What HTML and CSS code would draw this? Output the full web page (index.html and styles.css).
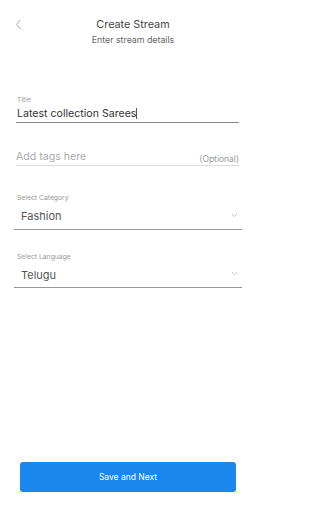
FILE: index.html
```html
<!DOCTYPE html>
<html>
<head>
<meta charset="utf-8">
<link rel="stylesheet" href="styles.css">
</head>
<body>
<div class="page">
  <header class="header">
    <span class="back">
      <svg width="8" height="12" viewBox="0 0 8 12"><path d="M5.5 1 L1.5 5.5 L5.5 10" fill="none" stroke="#aaa" stroke-width="1"/></svg>
    </span>
    <div class="titles">
      <div class="h-title">Create Stream</div>
      <div class="h-sub">Enter stream details</div>
    </div>
    <span></span>
  </header>

  <div class="form">
    <div class="field field-title">
      <div class="label">Title</div>
      <div class="value">Latest collection Sarees<span class="caret"></span></div>
    </div>

    <div class="field field-tags">
      <span class="placeholder">Add tags here</span>
      <span class="optional">(Optional)</span>
    </div>

    <div class="select select-cat">
      <div class="label">Select Category</div>
      <div class="sel-row">
        <span class="sel-value">Fashion</span>
        <svg class="down" width="7" height="5" viewBox="0 0 7 5"><path d="M0.8 1 L3.5 3.6 L6.2 1" fill="none" stroke="#bbb" stroke-width="0.9"/></svg>
      </div>
    </div>

    <div class="select select-lang">
      <div class="label">Select Language</div>
      <div class="sel-row">
        <span class="sel-value">Telugu</span>
        <svg class="down" width="7" height="5" viewBox="0 0 7 5"><path d="M0.8 1 L3.5 3.6 L6.2 1" fill="none" stroke="#bbb" stroke-width="0.9"/></svg>
      </div>
    </div>
  </div>

  <div class="footer">
    <button class="btn">Save and Next</button>
  </div>
</div>
</body>
</html>
```

FILE: styles.css
```css
* { box-sizing: border-box; }
html, body { margin: 0; padding: 0; background: #fff; }
body {
  font-family: Inter, "Open Sans", "Liberation Sans", sans-serif;
  width: 256px;
  height: 512px;
  overflow: hidden;
}
.page {
  display: flex;
  flex-direction: column;
  height: 512px;
}
.header {
  display: grid;
  grid-template-columns: 35px 1fr 25px;
  padding-top: 18px;
}
.back {
  padding-left: 15px;
  padding-top: 1px;
  display: block;
  height: 12px;
}
.back svg { display: block; }
.titles { text-align: center; }
.h-title {
  font-size: 10.8px;
  line-height: 14px;
  color: #444;
}
.h-sub {
  font-size: 8.8px;
  line-height: 11px;
  color: #666;
  margin-top: 2px;
}
.form {
  display: flex;
  flex-direction: column;
  padding: 0 17px 0 16px;
  margin-top: 49.5px;
}
.label {
  font-size: 6.8px;
  line-height: 9px;
  color: #999;
}
.field-title .label { padding-left: 1px; }
.value {
  font-size: 10.6px;
  line-height: 13px;
  color: #333;
  margin-top: 3.5px;
  padding-left: 1px;
  padding-bottom: 2px;
  border-bottom: 1px solid #888;
}
.caret {
  display: inline-block;
  width: 1px;
  height: 11px;
  background: #555;
  vertical-align: -2px;
}
.field-tags {
  display: flex;
  justify-content: space-between;
  align-items: flex-end;
  margin-top: 27px;
  padding-bottom: 2px;
  border-bottom: 1px solid #ddd;
}
.placeholder {
  font-size: 10.6px;
  line-height: 13px;
  color: #aaa;
}
.optional {
  font-size: 8.5px;
  line-height: 11px;
  color: #999;
  margin-bottom: -2px;
}
.select {
  margin-left: -2px;
  margin-right: -3px;
}
.select .label { padding-left: 3px; }
.select-cat { margin-top: 27px; }
.select-lang { margin-top: 22px; }
.sel-row {
  display: flex;
  justify-content: space-between;
  align-items: center;
  padding: 0 4px 0 7px;
  margin-top: 7px;
  padding-bottom: 5.5px;
  border-bottom: 1.5px solid #999;
}
.sel-value {
  font-size: 11px;
  line-height: 14px;
  color: #555;
}
.down { display: block; margin-top: -2px; }
.footer {
  margin-top: auto;
  padding: 0 20px 20px 20px;
}
.btn {
  display: block;
  width: 216px;
  height: 30px;
  border: none;
  border-radius: 3px;
  background: #1a86ee;
  color: #fff;
  font-family: inherit;
  font-size: 8.5px;
  padding: 0;
}
```
